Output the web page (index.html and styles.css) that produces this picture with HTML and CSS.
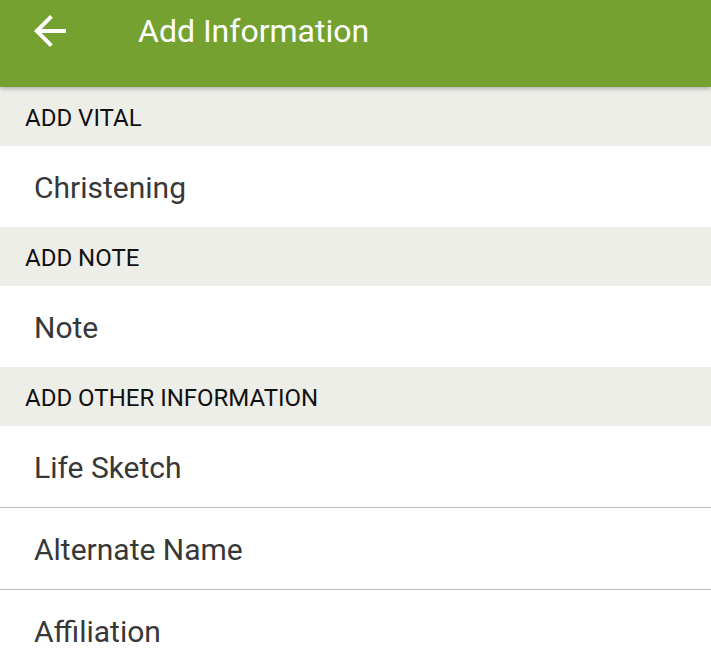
FILE: index.html
```html
<!DOCTYPE html>
<html lang="en">
<head>
    <meta charset="UTF-8">
    <meta name="viewport" content="width=device-width, initial-scale=1.0">
    <title>Add Information</title>
    <link rel="stylesheet" href="styles.css">
</head>
<body>
    <header class="toolbar">
        <button class="back-btn" aria-label="Back">
            <svg viewBox="0 0 24 24" width="48" height="48">
                <path d="M20 11H7.83l5.59-5.59L12 4l-8 8 8 8 1.41-1.41L7.83 13H20v-2z" fill="#fff"/>
            </svg>
        </button>
        <h1 class="toolbar-title">Add Information</h1>
    </header>

    <main class="list">
        <div class="section-header">ADD VITAL</div>
        <div class="item">Christening</div>

        <div class="section-header">ADD NOTE</div>
        <div class="item">Note</div>

        <div class="section-header">ADD OTHER INFORMATION</div>
        <div class="item divided">Life Sketch</div>
        <div class="item divided">Alternate Name</div>
        <div class="item">Affiliation</div>
    </main>
</body>
</html>
```

FILE: styles.css
```css
body {
    margin: 0;
    font-family: Roboto, 'Noto Sans', sans-serif;
    background-color: #fff;
    overflow: hidden;
}
.toolbar {
    position: relative;
    z-index: 1;
    display: flex;
    align-items: center;
    height: 62px;
    padding-bottom: 25px;
    background-color: #74a130;
    box-shadow: 0 2px 4px rgba(0, 0, 0, 0.25);
}
.back-btn {
    display: flex;
    margin: 0 0 0 26px;
    padding: 0;
    border: none;
    background: none;
}
.toolbar-title {
    margin: 0 0 0 64px;
    font-size: 32px;
    font-weight: 400;
    color: #fff;
}
.section-header {
    display: flex;
    align-items: center;
    height: 57px;
    padding: 2px 0 0 25px;
    background-color: #eeeee9;
    font-size: 24px;
    color: #111;
}
.item {
    display: flex;
    align-items: center;
    height: 79px;
    padding: 2px 0 0 34px;
    font-size: 30px;
    color: #383838;
}
.divided {
    border-bottom: 1px solid #bdbdb5;
}
```
